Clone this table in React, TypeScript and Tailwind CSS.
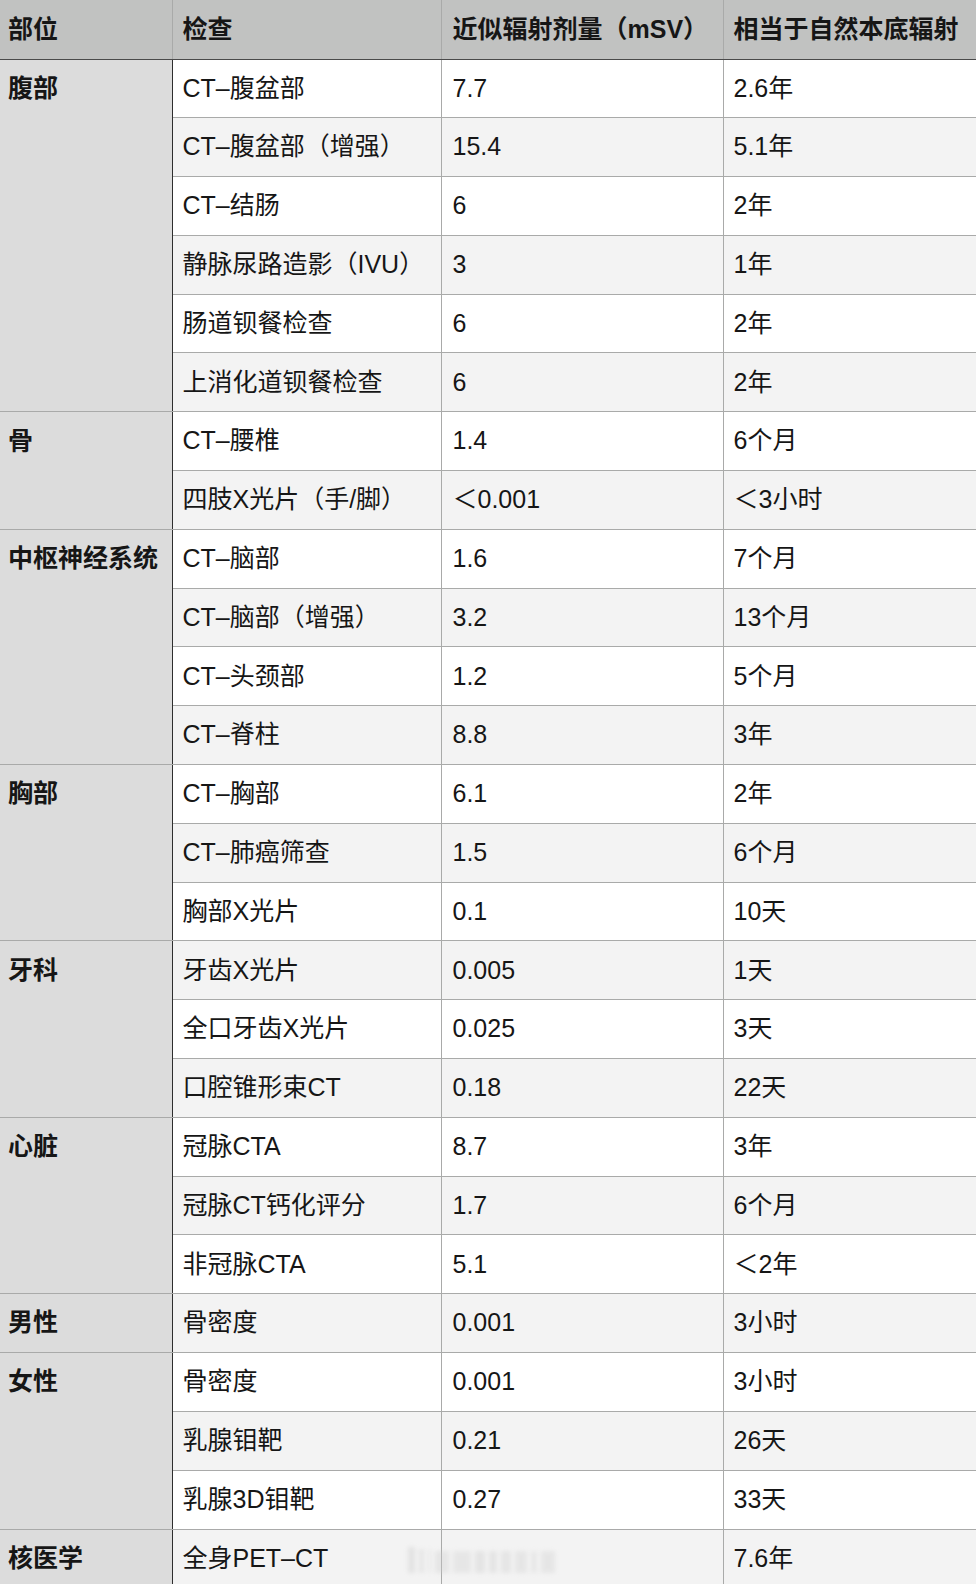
import React from "react";

type Group = { part: string; rows: [string, string, string][] };

const groups: Group[] = [
  {
    part: "腹部",
    rows: [
      ["CT–腹盆部", "7.7", "2.6年"],
      ["CT–腹盆部（增强）", "15.4", "5.1年"],
      ["CT–结肠", "6", "2年"],
      ["静脉尿路造影（IVU）", "3", "1年"],
      ["肠道钡餐检查", "6", "2年"],
      ["上消化道钡餐检查", "6", "2年"],
    ],
  },
  {
    part: "骨",
    rows: [
      ["CT–腰椎", "1.4", "6个月"],
      ["四肢X光片（手/脚）", "＜0.001", "＜3小时"],
    ],
  },
  {
    part: "中枢神经系统",
    rows: [
      ["CT–脑部", "1.6", "7个月"],
      ["CT–脑部（增强）", "3.2", "13个月"],
      ["CT–头颈部", "1.2", "5个月"],
      ["CT–脊柱", "8.8", "3年"],
    ],
  },
  {
    part: "胸部",
    rows: [
      ["CT–胸部", "6.1", "2年"],
      ["CT–肺癌筛查", "1.5", "6个月"],
      ["胸部X光片", "0.1", "10天"],
    ],
  },
  {
    part: "牙科",
    rows: [
      ["牙齿X光片", "0.005", "1天"],
      ["全口牙齿X光片", "0.025", "3天"],
      ["口腔锥形束CT", "0.18", "22天"],
    ],
  },
  {
    part: "心脏",
    rows: [
      ["冠脉CTA", "8.7", "3年"],
      ["冠脉CT钙化评分", "1.7", "6个月"],
      ["非冠脉CTA", "5.1", "＜2年"],
    ],
  },
  { part: "男性", rows: [["骨密度", "0.001", "3小时"]] },
  {
    part: "女性",
    rows: [
      ["骨密度", "0.001", "3小时"],
      ["乳腺钼靶", "0.21", "26天"],
      ["乳腺3D钼靶", "0.27", "33天"],
    ],
  },
  { part: "核医学", rows: [["全身PET–CT", "", "7.6年"]] },
];

const font = {
  fontFamily: '"Liberation Sans", "Noto Sans CJK SC", sans-serif',
};

export default function App() {
  let idx = 0;
  return (
    <div className="relative w-[976px] h-[1584px] overflow-hidden bg-white text-[#161616]" style={font}>
      <table className="table-fixed border-collapse w-[976px] text-[25px]">
        <colgroup>
          <col className="w-[172px]" />
          <col className="w-[269px]" />
          <col className="w-[282px]" />
          <col />
        </colgroup>
        <thead>
          <tr className="h-[59px] bg-[#c1c2c1] font-bold">
            <th className="text-left font-bold pl-[8px] border-b border-b-[#4a4a4a] border-r border-r-[#a9aaa9]">部位</th>
            <th className="text-left font-bold pl-[10px] border-b border-b-[#4a4a4a] border-r border-r-[#a9aaa9]">检查</th>
            <th className="text-left font-bold pl-[11px] border-b border-b-[#4a4a4a] border-r border-r-[#a9aaa9]">近似辐射剂量（mSV）</th>
            <th className="text-left font-bold pl-[10px] border-b border-b-[#4a4a4a] whitespace-nowrap">相当于自然本底辐射</th>
          </tr>
        </thead>
        <tbody>
          {groups.map((g) =>
            g.rows.map((r, i) => {
              const shade = idx++ % 2 === 1 ? "bg-[#f3f3f3]" : "bg-white";
              return (
                <tr key={g.part + i} className={`h-[58.8px] ${shade}`}>
                  {i === 0 && (
                    <td
                      rowSpan={g.rows.length}
                      className="align-top bg-[#dcdcdc] border-b border-b-[#a9aaa9] border-r border-r-[#2e2e2e] p-0"
                    >
                      <div className="h-[58px] flex items-center pl-[8px] font-bold whitespace-nowrap">{g.part}</div>
                    </td>
                  )}
                  <td className="pl-[10px] border-b border-b-[#a9aaa9] border-r border-r-[#a9aaa9] whitespace-nowrap">{r[0]}</td>
                  <td className="pl-[11px] border-b border-b-[#a9aaa9] border-r border-r-[#a9aaa9] whitespace-nowrap">{r[1]}</td>
                  <td className="pl-[10px] border-b border-b-[#a9aaa9] whitespace-nowrap">{r[2]}</td>
                </tr>
              );
            })
          )}
        </tbody>
      </table>
      {/* blurred watermark over the last row */}
      <div className="absolute left-[408px] top-[1547px] flex items-end gap-[4px] blur-[2px] opacity-35">
        <div className="w-[7px] h-[26px] bg-[#c4c4c4]" />
        <div className="w-[5px] h-[24px] bg-[#cccccc]" />
        <div className="w-[3px] h-[24px] bg-[#d8d8d8]" />
        <div className="w-[14px] h-[22px] bg-[#cccccc]" />
        <div className="w-[18px] h-[22px] bg-[#d0d0d0]" />
        <div className="w-[10px] h-[22px] bg-[#c8c8c8]" />
        <div className="w-[8px] h-[22px] bg-[#cacaca]" />
        <div className="w-[10px] h-[22px] bg-[#cccccc]" />
        <div className="w-[12px] h-[22px] bg-[#cecece]" />
        <div className="w-[6px] h-[22px] bg-[#d2d2d2]" />
        <div className="w-[14px] h-[22px] bg-[#cecece]" />
      </div>
    </div>
  );
}
